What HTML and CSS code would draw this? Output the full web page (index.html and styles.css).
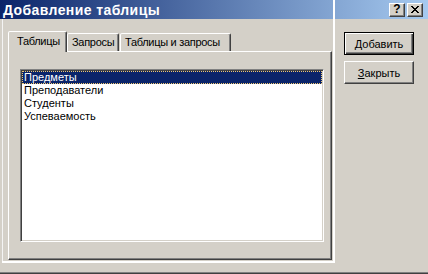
FILE: index.html
```html
<!DOCTYPE html>
<html lang="ru">
<head>
    <meta charset="UTF-8">
    <title>Добавление таблицы</title>
    <link rel="stylesheet" href="styles.css">
</head>
<body>
    <div class="window">
        <div class="titlebar">
            <span class="title">Добавление таблицы</span>
            <div class="caption-buttons">
                <div class="cap-btn help">?</div>
                <div class="cap-btn close">
                    <svg width="8" height="7" viewBox="0 0 8 7">
                        <path d="M0 0h2v1h-2zM6 0h2v1h-2zM1 1h2v1h-2zM5 1h2v1h-2zM2 2h4v1h-4zM3 3h2v1h-2zM2 4h4v1h-4zM1 5h2v1h-2zM5 5h2v1h-2zM0 6h2v1h-2zM6 6h2v1h-2z" fill="#000"/>
                    </svg>
                </div>
            </div>
        </div>

        <div class="client">
            <div class="tabctl">
                <div class="tabs">
                    <div class="tab active">Таблицы</div>
                    <div class="tab tab-queries">Запросы</div>
                    <div class="tab tab-both">Таблицы и запросы</div>
                </div>
                <div class="panel">
                    <ul class="listbox">
                        <li class="selected">Предметы</li>
                        <li>Преподаватели</li>
                        <li>Студенты</li>
                        <li>Успеваемость</li>
                    </ul>
                </div>
            </div>
            <div class="actions">
                <button class="btn default"><u>Д</u>обавить</button>
                <button class="btn"><u>З</u>акрыть</button>
            </div>
        </div>

        <div class="drag-frame"></div>
    </div>
</body>
</html>
```

FILE: styles.css
```css
* {
    box-sizing: border-box;
}

body {
    margin: 0;
    width: 428px;
    height: 274px;
    overflow: hidden;
    background: #d4d0c8;
    font-family: "Liberation Sans", Arial, sans-serif;
    font-size: 11px;
    color: #000;
}

.window {
    position: relative;
    height: 274px;
    border-bottom: 1px solid #404040;
    box-shadow: inset 0 -1px #808080;
}

/* title bar */
.titlebar {
    height: 19px;
    display: flex;
    align-items: center;
    padding: 0 5px 0 3px;
    background: linear-gradient(to right, #0a246a, #a6caf0);
}

.title {
    color: #fff;
    font-weight: bold;
    font-size: 14px;
    letter-spacing: 0.4px;
}

.caption-buttons {
    margin-left: auto;
    display: flex;
    gap: 2px;
}

.cap-btn {
    width: 16px;
    height: 14px;
    background: #d4d0c8;
    border: 1px solid;
    border-color: #fff #404040 #404040 #fff;
    box-shadow: inset -1px -1px #808080;
    display: flex;
    align-items: center;
    justify-content: center;
}

.help {
    font-weight: bold;
    font-size: 12px;
    line-height: 1;
    padding-bottom: 1px;
}

/* client area */
.client {
    display: flex;
    padding: 12px 0 0 8px;
}

.tabctl {
    width: 324px;
}

.tabs {
    display: flex;
    align-items: flex-end;
    height: 20px;
    position: relative;
    z-index: 1;
}

.tab {
    height: 18px;
    padding: 0 0 0 4px;
    line-height: 16px;
    letter-spacing: -0.3px;
    background: #d4d0c8;
    border: 1px solid;
    border-bottom: none;
    border-color: #fff #404040 transparent #fff;
    border-radius: 2px 2px 0 0;
    box-shadow: inset -1px 0 #808080;
    white-space: nowrap;
}

.tab.active {
    width: 59px;
    height: 21px;
    margin-bottom: -1px;
    padding-left: 8px;
    line-height: 18px;
}

.tab-queries {
    width: 52px;
}

.tab-both {
    width: 111px;
    margin-left: 1px;
}

.panel {
    height: 209px;
    padding: 17px 0 0 11px;
    border: 1px solid;
    border-color: #fff #404040 #404040 #fff;
    box-shadow: inset -1px -1px #808080;
}

.listbox {
    list-style: none;
    margin: 0;
    padding: 1px 1px 0;
    width: 304px;
    height: 173px;
    background: #fff;
    border: 1px solid;
    border-color: #808080 #fff #fff #808080;
    box-shadow: inset 1px 1px #404040, inset -1px -1px #d4d0c8;
}

.listbox li {
    height: 13px;
    line-height: 13px;
    padding-left: 2px;
}

.listbox li.selected {
    background: #0a246a;
    color: #fff;
    outline: 1px dotted #f0c870;
    outline-offset: -1px;
}

/* buttons */
.actions {
    display: flex;
    flex-direction: column;
    gap: 6px;
    margin: 1px 0 0 12px;
}

.btn {
    width: 70px;
    height: 23px;
    padding: 0;
    font: inherit;
    background: #d4d0c8;
    border: 1px solid;
    border-color: #fff #404040 #404040 #fff;
    box-shadow: inset -1px -1px #808080;
}

.btn.default {
    border-color: #000;
    box-shadow: inset 1px 1px #fff, inset -1px -1px #404040, inset -2px -2px #808080;
}

/* window drag outline left on screen */
.drag-frame {
    position: absolute;
    left: 2px;
    top: 0;
    width: 333px;
    height: 263px;
    border-right: 2px solid #fff;
    border-bottom: 2px solid #fff;
    pointer-events: none;
}

.drag-frame::before {
    content: "";
    position: absolute;
    left: 0;
    top: 19px;
    bottom: 0;
    border-left: 1px solid #f4f4f4;
}
```
